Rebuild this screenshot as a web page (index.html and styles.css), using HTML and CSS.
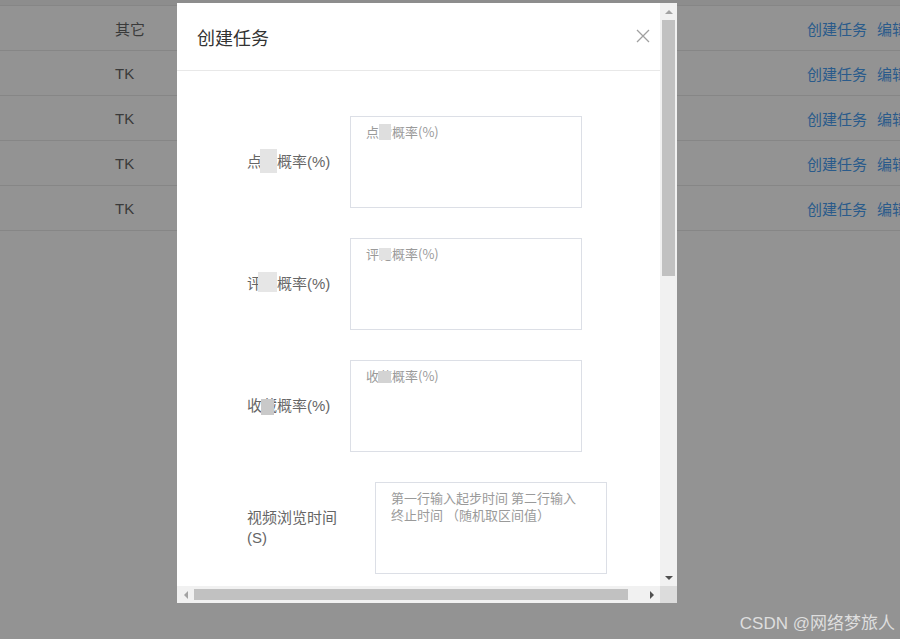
FILE: index.html
```html
<!DOCTYPE html>
<html lang="zh">
<head>
<meta charset="utf-8">
<title>创建任务</title>
<link rel="stylesheet" href="styles.css">
</head>
<body>
<div class="page">
  <div class="table">
    <div class="thead"></div>
    <div class="row"><span class="c1">其它</span><span class="ops"><a>创建任务</a><a>编辑</a></span></div>
    <div class="row"><span class="c1">TK</span><span class="ops"><a>创建任务</a><a>编辑</a></span></div>
    <div class="row"><span class="c1">TK</span><span class="ops"><a>创建任务</a><a>编辑</a></span></div>
    <div class="row"><span class="c1">TK</span><span class="ops"><a>创建任务</a><a>编辑</a></span></div>
    <div class="row"><span class="c1">TK</span><span class="ops"><a>创建任务</a><a>编辑</a></span></div>
  </div>

  <div class="modal">
    <div class="m-main">
      <div class="m-head">
        <span class="m-title">创建任务</span>
        <svg class="m-close" width="14" height="14" viewBox="0 0 14 14"><path d="M1 1L13 13M13 1L1 13" stroke="#a0a0a0" stroke-width="1.3" fill="none"/></svg>
      </div>
      <div class="m-body">
        <div class="f-row">
          <label class="f-label">点<span class="mask mk1">赞</span>概率(%)</label>
          <div class="ta-wrap"><textarea placeholder="点赞概率(%)"></textarea><span class="ph-mask pm1"></span></div>
        </div>
        <div class="f-row">
          <label class="f-label">评<span class="mask mk2">论</span>概率(%)</label>
          <div class="ta-wrap"><textarea placeholder="评论概率(%)"></textarea><span class="ph-mask pm2"></span></div>
        </div>
        <div class="f-row">
          <label class="f-label">收<span class="mask mk3">藏</span>概率(%)</label>
          <div class="ta-wrap"><textarea placeholder="收藏概率(%)"></textarea><span class="ph-mask pm3"></span></div>
        </div>
        <div class="f-row">
          <label class="f-label wide">视频浏览时间(S)</label>
          <div class="ta-wrap"><textarea placeholder="第一行输入起步时间 第二行输入&#10;终止时间 （随机取区间值）"></textarea></div>
        </div>
      </div>
    </div>
    <div class="vbar">
      <div class="sb-btn"><span class="tri up"></span></div>
      <div class="v-track"><div class="v-thumb"></div></div>
      <div class="sb-btn"><span class="tri down"></span></div>
    </div>
    <div class="hbar">
      <div class="sb-btn"><span class="tri left"></span></div>
      <div class="h-track"><div class="h-thumb"></div></div>
      <div class="sb-btn"><span class="tri right"></span></div>
    </div>
    <div class="corner"></div>
  </div>

  <div class="wm">CSDN @网络梦旅人</div>
</div>
</body>
</html>
```

FILE: styles.css
```css
* { box-sizing: border-box; }
html, body { margin: 0; padding: 0; }
body {
  background: #939393;
  font-family: "Liberation Sans", "Noto Sans CJK SC", sans-serif;
  width: 900px;
  height: 639px;
  overflow: hidden;
}
.page { position: relative; width: 900px; height: 639px; }

.thead { height: 6px; background: #8d8d8d; border-bottom: 1px solid #868686; }
.row {
  display: grid;
  grid-template-columns: 807px 1fr;
  height: 45px;
  align-items: center;
  border-bottom: 1px solid #868686;
  font-size: 15px;
  white-space: nowrap;
  overflow: hidden;
}
.c1 { padding-left: 115px; color: #3a3a3a; }
.ops { display: flex; gap: 10px; }
.ops a { color: #2a5b8b; }

.modal {
  position: absolute;
  left: 177px;
  top: 3px;
  width: 500px;
  height: 600px;
  background: #fff;
  display: grid;
  grid-template-columns: 483px 17px;
  grid-template-rows: 583px 17px;
}
.m-main { overflow: hidden; }
.m-head {
  height: 68px;
  border-bottom: 1px solid #e8e8e8;
  display: flex;
  justify-content: space-between;
  align-items: center;
  padding: 0 10px 0 20px;
}
.m-title { font-size: 18px; color: #333; font-family: "Noto Sans CJK SC", sans-serif; }
.m-close { margin-top: -1px; }

.m-body { padding: 45px 0 0 70px; }
.f-row { display: flex; align-items: center; margin-bottom: 30px; }
.f-label {
  flex: none;
  width: 83px;
  margin-right: 20px;
  font-size: 15px;
  line-height: 20px;
  color: #666;
  white-space: nowrap;
}
.f-label.wide { width: 108px; white-space: normal; }
.mask { position: relative; }
.mask::after { content: ""; position: absolute; }
.mk1::after { left: -2px; top: -4px; width: 17px; height: 24px; background: #e4e4e4; }
.mk2::after { left: -4px; top: -3px; width: 19px; height: 20px; background: #e6e6e6; }
.mk3::after { left: -1px; top: 2px; width: 13px; height: 16px; background: #c9c9c9; }

.ta-wrap { position: relative; }
textarea {
  display: block;
  width: 232px;
  height: 92px;
  border: 1px solid #dcdfe6;
  padding: 6px 15px;
  font-family: "Noto Sans CJK SC", sans-serif;
  font-size: 13px;
  line-height: 17px;
  resize: none;
  outline: none;
  color: #606266;
}
textarea::placeholder { color: #9a9a9a; }
.ph-mask { position: absolute; width: 12px; height: 14px; background: #dedede; }
.pm1 { left: 29px; top: 8px; height: 16px; }
.pm2 { left: 29px; top: 10px; height: 12px; background: #e2e2e2; }
.pm3 { left: 28px; top: 11px; height: 12px; width: 13px; background: #d3d3d3; }

.vbar, .hbar { background: #f1f1f1; display: flex; }
.vbar { flex-direction: column; }
.sb-btn { width: 17px; height: 17px; display: flex; align-items: center; justify-content: center; flex: none; }
.v-track { flex: 1; padding: 0 2px; }
.v-thumb { height: 256px; background: #c1c1c1; }
.h-track { flex: 1; padding: 3px 0; }
.h-thumb { width: 434px; height: 11px; background: #c1c1c1; }
.corner { background: #dcdcdc; }

.tri { width: 0; height: 0; border: 4px solid transparent; }
.tri.up { border-bottom-color: #a3a3a3; border-top-width: 0; }
.tri.down { border-top-color: #505050; border-bottom-width: 0; }
.tri.left { border-right-color: #a3a3a3; border-left-width: 0; }
.tri.right { border-left-color: #505050; border-right-width: 0; }

.wm {
  position: absolute;
  right: 5px;
  bottom: 5px;
  font-size: 17px;
  color: #dedede;
  font-family: "Liberation Sans", "Noto Sans CJK SC", sans-serif;
}
```
